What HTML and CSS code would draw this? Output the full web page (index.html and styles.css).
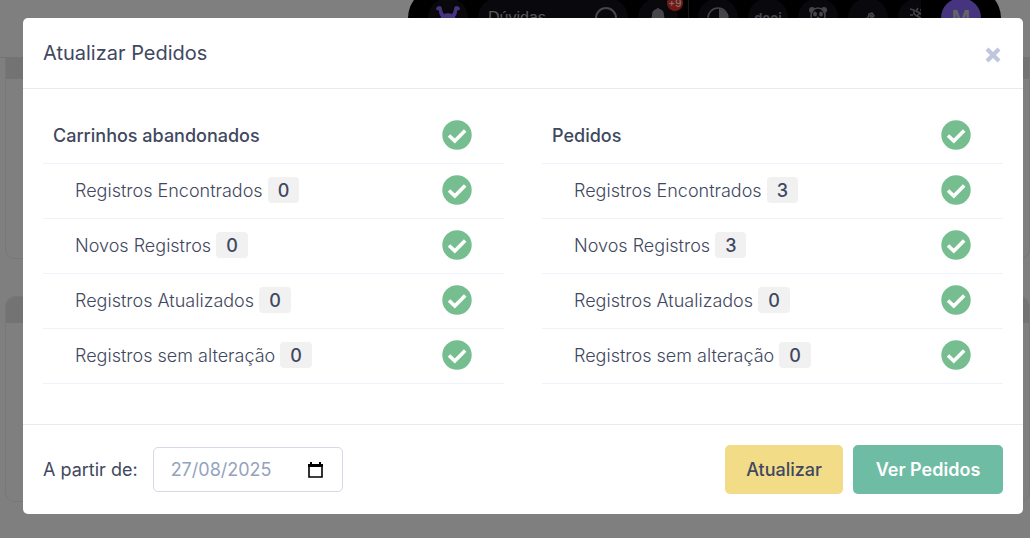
FILE: index.html
```
<!DOCTYPE html>
<html lang="pt-BR">
<head>
    <meta charset="UTF-8">
    <meta name="viewport" content="width=device-width, initial-scale=1.0">
    <title>Atualizar Pedidos</title>
    <link rel="stylesheet" href="styles.css">
</head>
<body>
    <svg width="0" height="0" class="sprite" aria-hidden="true">
        <symbol id="check" viewBox="0 0 30 30">
            <circle cx="15" cy="15" r="14.7" fill="#76be90"/>
            <path d="M7 15.500l5.800 5.500L23.200 10.500" fill="none" stroke="#fff" stroke-width="3.600"/>
        </symbol>
    </svg>

    <div class="page">
        <header class="topbar">
            <nav class="nav-pill">
                <span class="nav-circle">
                    <svg width="26" height="26" viewBox="0 0 26 26" fill="#8f68ff"><path d="M1 4c0-2 2-3 4-3 2 1 2 2 2 4 1 2 1 3 2 4 2-1 6-1 8 0 1-1 1-2 2-4 0-2 0-3 2-4 2 0 4 1 4 3-1 2-3 1-3 2 0 3-1 4-2 6 1 2 2 5 1 8l-8 6-8-6c-1-3 0-6 1-8-1-2-2-3-2-6 0-1-2 0-3-2z"/></svg>
                </span>
                <span class="nav-search">
                    Dúvidas
                    <svg width="24" height="24" viewBox="0 0 24 24" fill="none" stroke="#8a8a94" stroke-width="2"><circle cx="12" cy="12" r="10"/><path d="M18 20l4 4"/></svg>
                </span>
                <span class="nav-circle">
                    <svg width="20" height="20" viewBox="0 0 20 20" fill="#8a8a94"><path d="M10 0c-1 0-1.500 1-1.500 1C5 2 4 4 4 8l-2 7h16l-2-7c0-4-1-6-4.500-7 0 0-.5-1-1.500-1zM8 17h4c0 3-4 3-4 0z"/></svg>
                    <span class="nav-badge">+9</span>
                </span>
                <span class="nav-divider"></span>
                <span class="nav-apps">
                    <span class="nav-circle">
                        <svg width="22" height="22" viewBox="0 0 22 22"><circle cx="11" cy="11" r="10" fill="none" stroke="#8a8a94" stroke-width="1.500"/><path d="M12 2a9 9 0 0 1 7 14l-7-5z" fill="#8a8a94"/></svg>
                    </span>
                    <span class="nav-circle nav-brand">dooi</span>
                    <span class="nav-circle">
                        <svg width="20" height="24" viewBox="0 0 20 24"><g fill="#8a8a94"><circle cx="4" cy="4" r="3"/><circle cx="16" cy="4" r="3"/></g><ellipse cx="10" cy="10" rx="7" ry="8" fill="#10101a" stroke="#8a8a94" stroke-width="1.500"/><g fill="#8a8a94"><ellipse cx="7" cy="8" rx="2" ry="2.500"/><ellipse cx="13" cy="8" rx="2" ry="2.500"/><circle cx="10" cy="12" r="1.500"/></g></svg>
                    </span>
                    <span class="nav-circle">
                        <svg width="20" height="20" viewBox="0 0 20 20" fill="none" stroke="#8a8a94" stroke-width="1.500"><path d="M3 15l3-4 4-1 1-4 3-1 2 3-2 2 1 4-4 3"/><circle cx="13" cy="8" r="1"/></svg>
                    </span>
                    <span class="nav-circle">
                        <svg width="20" height="22" viewBox="0 0 20 22" fill="none" stroke="#8a8a94" stroke-width="1.500"><path d="M2 2l4 1v4l3 2M5 8H2M10 1l-2 3 4 2-3 3 4 2-2 4M15 1v14M12 3h6M12 7h6"/></svg>
                    </span>
                </span>
                <span class="nav-circle avatar">M</span>
            </nav>
        </header>
        <main class="cards">
            <div class="card card-first"><div class="card-head"></div></div>
            <div class="card"><div class="card-head"></div></div>
        </main>
    </div>

    <div class="overlay">
        <div class="modal" role="dialog" aria-labelledby="modalTitle">
            <div class="modal-header">
                <h1 id="modalTitle">Atualizar Pedidos</h1>
                <button type="button" class="close" aria-label="Fechar">
                    <svg width="16" height="16" viewBox="0 0 16 16"><path d="M2 2l12 12M14 2L2 14" stroke="#bfc6dd" stroke-width="4.200"/></svg>
                </button>
            </div>

            <div class="modal-body">
                <ul class="status-list">
                    <li class="status-title"><span>Carrinhos abandonados</span><svg class="check"><use href="#check"/></svg></li>
                    <li><span>Registros Encontrados <b>0</b></span><svg class="check"><use href="#check"/></svg></li>
                    <li><span>Novos Registros <b>0</b></span><svg class="check"><use href="#check"/></svg></li>
                    <li><span>Registros Atualizados <b>0</b></span><svg class="check"><use href="#check"/></svg></li>
                    <li><span>Registros sem alteração <b>0</b></span><svg class="check"><use href="#check"/></svg></li>
                </ul>
                <ul class="status-list">
                    <li class="status-title"><span>Pedidos</span><svg class="check"><use href="#check"/></svg></li>
                    <li><span>Registros Encontrados <b>3</b></span><svg class="check"><use href="#check"/></svg></li>
                    <li><span>Novos Registros <b>3</b></span><svg class="check"><use href="#check"/></svg></li>
                    <li><span>Registros Atualizados <b>0</b></span><svg class="check"><use href="#check"/></svg></li>
                    <li><span>Registros sem alteração <b>0</b></span><svg class="check"><use href="#check"/></svg></li>
                </ul>
            </div>

            <div class="modal-footer">
                <label for="fromDate">A partir de:</label>
                <div class="date-field">
                    <input type="text" id="fromDate" value="27/08/2025" inputmode="numeric">
                    <svg width="15" height="16" viewBox="0 0 15 16"><path d="M1 3h13v12H1z" fill="none" stroke="#000" stroke-width="1.600"/><path d="M0 2h15v3H0zM2 0h2v3H2zM11 0h2v3h-2z"/></svg>
                </div>
                <div class="actions">
                    <button type="button" class="btn btn-warning">Atualizar</button>
                    <button type="button" class="btn btn-success">Ver Pedidos</button>
                </div>
            </div>
        </div>
    </div>
</body>
</html>
```

FILE: styles.css
```
* {
    box-sizing: border-box;
}
body {
    margin: 0;
    min-height: 100vh;
    overflow: hidden;
    background: #fff;
    color: #3f4860;
    font-family: Inter, 'Liberation Sans', sans-serif;
    font-size: 18px;
}
.sprite {
    position: absolute;
}

/* Page behind the dialog */
.page {
    height: 100vh;
    overflow: hidden;
}
.topbar {
    display: flex;
    justify-content: flex-end;
    height: 58px;
    padding-right: 29px;
    border-bottom: 1px solid #e6e6e6;
}
.nav-pill {
    display: flex;
    align-items: center;
    gap: 10px;
    height: 60px;
    margin-top: -12px;
    padding: 0 20px;
    border-radius: 30px;
    background: #000;
}
.nav-circle {
    display: flex;
    flex: none;
    align-items: center;
    justify-content: center;
    position: relative;
    width: 40px;
    height: 40px;
    border-radius: 50%;
    background: #10101a;
    color: #8a8a94;
}
.nav-search {
    display: flex;
    align-items: center;
    justify-content: space-between;
    width: 150px;
    height: 40px;
    padding: 0 10px;
    border-radius: 20px;
    background: #10101a;
    color: #b0b0b0;
    font-family: 'Liberation Sans', sans-serif;
    font-size: 16px;
}
.nav-badge {
    position: absolute;
    top: -3px;
    right: -5px;
    width: 16px;
    height: 16px;
    border-radius: 8px;
    background: #e6352b;
    color: #fff;
    font-size: 10px;
    line-height: 16px;
    text-align: center;
}
.nav-divider {
    width: 1px;
    height: 40px;
    margin: 0 -1px 0 0;
    background: #333;
}
.nav-apps {
    display: flex;
    gap: 10px;
    width: 223px;
    margin-right: 10px;
    overflow: hidden;
}
.nav-brand {
    font-size: 13px;
    font-weight: 700;
}
.avatar {
    background: #8f68ff;
    color: #ccc;
    font-weight: 600;
    font-size: 20px;
}
.cards {
    display: grid;
    gap: 37px;
    padding-left: 5px;
}
.card {
    height: 206px;
    overflow: hidden;
    border: 1px solid #eee;
    border-radius: 10px;
}
.card-first {
    height: 201px;
    border-top: 0;
    border-radius: 0 0 10px 10px;
}
.card-head {
    height: 26px;
    background: #e6e6e6;
}
.card-first .card-head {
    height: 21px;
}

/* Dialog */
.overlay {
    position: fixed;
    inset: 0;
    padding: 18px 7px 24px 23px;
    background: rgba(0, 0, 0, 0.5);
}
.modal {
    max-width: 1000px;
    margin: 0 auto;
    border-radius: 5px;
    background: #fff;
}
.modal-header {
    display: flex;
    align-items: center;
    justify-content: space-between;
    padding: 20px;
    border-bottom: 1px solid #e9e9ef;
}
.modal-header h1 {
    margin: 0;
    font-size: 20px;
    font-weight: 400;
    line-height: 30px;
}
.close {
    display: flex;
    padding: 4px 2px 0;
    border: 0;
    background: none;
    cursor: pointer;
}
.modal-body {
    display: grid;
    grid-template-columns: 1fr 1fr;
    gap: 38px;
    padding: 20px 20px 40px;
}
.status-list {
    margin: 0;
    padding: 0;
    list-style: none;
}
.status-list li {
    display: flex;
    align-items: center;
    justify-content: space-between;
    height: 55px;
    padding: 0 32px 2px;
    border-bottom: 1px solid #eff1fb;
    font-weight: 300;
}
.status-list .status-title {
    padding-left: 10px;
    font-weight: 500;
}
.status-list b {
    display: inline-block;
    padding: 2px 10px 0;
    border-radius: 4px;
    background: #f1f1f1;
    font-weight: 500;
    line-height: 24px;
}
.check {
    width: 30px;
    height: 30px;
}
.modal-footer {
    display: flex;
    align-items: center;
    padding: 20px;
    border-top: 1px solid #e9e9ef;
}
.date-field {
    display: flex;
    align-items: center;
    width: 190px;
    height: 45px;
    margin-left: 15px;
    padding: 0 19px 0 17px;
    border: 1px solid #d3dae6;
    border-radius: 5px;
}
.date-field input {
    flex: 1;
    min-width: 0;
    padding: 0;
    border: 0;
    outline: none;
    background: none;
    color: #94a3bd;
    font: inherit;
}
.actions {
    display: flex;
    gap: 10px;
    margin-left: auto;
}
.btn {
    padding: 0 21px;
    border: 0;
    border-radius: 5px;
    font-family: inherit;
    font-size: 18px;
    line-height: 49px;
    cursor: pointer;
}
.btn-warning {
    background: #f2dc88;
    color: #3f4860;
    font-weight: 500;
}
.btn-success {
    min-width: 150px;
    background: #6ebca3;
    color: #fff;
    font-weight: 600;
}
```
